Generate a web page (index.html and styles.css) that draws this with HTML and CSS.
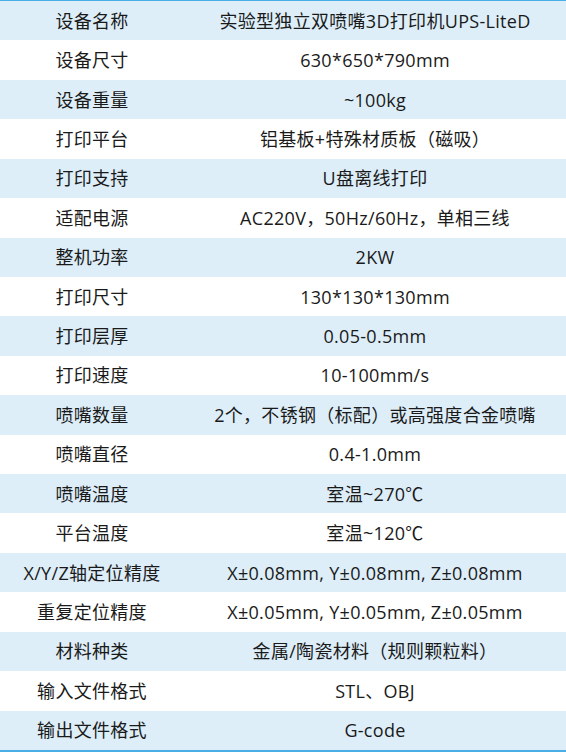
FILE: index.html
```html
<!DOCTYPE html>
<html lang="zh">
<head>
<meta charset="utf-8">
<title>设备参数</title>
<link rel="stylesheet" href="styles.css">
</head>
<body>
<div class="spec">
  <div class="row"><div class="k">设备名称</div><div class="v">实验型独立双喷嘴3D打印机UPS-LiteD</div></div>
  <div class="row"><div class="k">设备尺寸</div><div class="v">630*650*790mm</div></div>
  <div class="row"><div class="k">设备重量</div><div class="v">~100kg</div></div>
  <div class="row"><div class="k">打印平台</div><div class="v">铝基板+特殊材质板（磁吸）</div></div>
  <div class="row"><div class="k">打印支持</div><div class="v">U盘离线打印</div></div>
  <div class="row"><div class="k">适配电源</div><div class="v">AC220V，50Hz/60Hz，单相三线</div></div>
  <div class="row"><div class="k">整机功率</div><div class="v">2KW</div></div>
  <div class="row"><div class="k">打印尺寸</div><div class="v">130*130*130mm</div></div>
  <div class="row"><div class="k">打印层厚</div><div class="v">0.05-0.5mm</div></div>
  <div class="row"><div class="k">打印速度</div><div class="v">10-100mm/s</div></div>
  <div class="row"><div class="k">喷嘴数量</div><div class="v">2个，不锈钢（标配）或高强度合金喷嘴</div></div>
  <div class="row"><div class="k">喷嘴直径</div><div class="v">0.4-1.0mm</div></div>
  <div class="row"><div class="k">喷嘴温度</div><div class="v">室温~270℃</div></div>
  <div class="row"><div class="k">平台温度</div><div class="v">室温~120℃</div></div>
  <div class="row"><div class="k">X/Y/Z轴定位精度</div><div class="v">X±0.08mm, Y±0.08mm, Z±0.08mm</div></div>
  <div class="row"><div class="k">重复定位精度</div><div class="v">X±0.05mm, Y±0.05mm, Z±0.05mm</div></div>
  <div class="row"><div class="k">材料种类</div><div class="v">金属/陶瓷材料（规则颗粒料）</div></div>
  <div class="row"><div class="k">输入文件格式</div><div class="v">STL、OBJ</div></div>
  <div class="row"><div class="k">输出文件格式</div><div class="v">G-code</div></div>
</div>
</body>
</html>
```
FILE: styles.css
```css
html, body {
  margin: 0;
  padding: 0;
  background: #ffffff;
}
.spec {
  width: 566px;
  height: 752px;
  box-sizing: border-box;
  border-top: 1px solid #4aaee6;
  border-bottom: 2px solid #4aaee6;
  display: grid;
  grid-auto-rows: 1fr;
  font-family: "Open Sans", "Noto Sans CJK SC", sans-serif;
  font-size: 18px;
  letter-spacing: 0.3px;
  color: #1a1a1a;
}
.row {
  display: grid;
  grid-template-columns: 184px 1fr;
  align-items: center;
  min-height: 0;
}
.row:nth-child(odd) {
  background: #ddeef9;
}
.k, .v {
  text-align: center;
  white-space: nowrap;
  line-height: 1;
}
```
